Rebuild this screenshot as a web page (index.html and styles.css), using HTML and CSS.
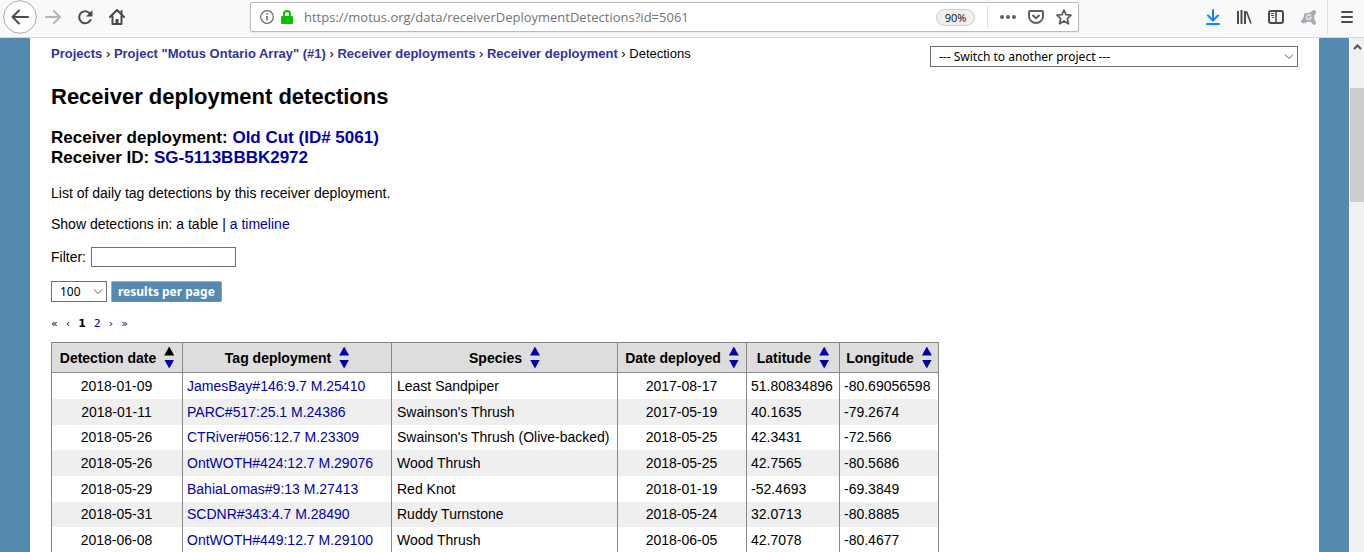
FILE: index.html
```html
<!DOCTYPE html>
<html lang="en">
<head>
<meta charset="utf-8">
<title>Receiver deployment detections</title>
<link rel="stylesheet" href="styles.css">
</head>
<body>
<header class="toolbar">
  <nav class="nav-buttons">
    <button class="icon-button back" aria-label="Back"><svg width="34" height="34" viewBox="0 0 34 34" fill="none"><circle cx="17" cy="17" r="16.3" fill="#fff" stroke="#aaa"/><path d="M25 17H10M16 10.500L9.500 17L16 23.500" stroke="#4a4a4c" stroke-width="2" stroke-linecap="round" stroke-linejoin="round"/></svg></button>
    <button class="icon-button" aria-label="Forward"><svg width="16" height="16" viewBox="0 0 16 16" fill="none" stroke="#b5b5b6" stroke-width="2" stroke-linecap="round" stroke-linejoin="round"><path d="M1 8H14M9 2L15 8L9 14"/></svg></button>
    <button class="icon-button" aria-label="Reload"><svg width="16" height="16" viewBox="0 0 16 16" fill="none" stroke="#4a4a4c" stroke-width="2"><path d="M13.500 5.500A6 6 0 1 0 13.500 11" stroke-linecap="round"/><path d="M15.500 1V7.500H9Z" fill="#4a4a4c" stroke="none"/></svg></button>
    <button class="icon-button" aria-label="Home"><svg width="16" height="16" viewBox="0 0 16 16" fill="none" stroke="#4a4a4c" stroke-width="2" stroke-linecap="round" stroke-linejoin="round"><path d="M1 8L8 1L15 8M3.500 7V15H12.500V7"/><path d="M8 15V10" stroke-width="3" stroke-linecap="butt"/><path d="M12.500 2V5"/></svg></button>
  </nav>
  <div class="address">
    <svg class="info" width="14" height="14" viewBox="0 0 14 14" fill="none" stroke="#69696b"><circle cx="7" cy="7" r="6.300" stroke-width="1.200"/><path d="M7 6V10.500M7 3.200V4.800" stroke-width="1.600"/></svg>
    <svg width="12" height="15" viewBox="0 0 12 15"><path d="M3 7V4A3 3 0 0 1 9 4V7" fill="none" stroke="#12bc00" stroke-width="2"/><rect y="6" width="12" height="8" rx="1" fill="#12bc00"/></svg>
    <input class="url" aria-label="Address" value="https://motus.org/data/receiverDeploymentDetections?id=5061">
    <button class="zoom-level">90%</button>
    <span class="address-divider"></span>
    <button class="icon-button" aria-label="Page actions"><svg width="16" height="16" viewBox="0 0 16 16" fill="#606062"><circle cx="2" cy="8" r="2"/><circle cx="8" cy="8" r="2"/><circle cx="14" cy="8" r="2"/></svg></button>
    <button class="icon-button" aria-label="Save to Pocket"><svg width="16" height="16" viewBox="0 0 16 16" fill="none" stroke="#606062" stroke-width="2" stroke-linecap="round" stroke-linejoin="round"><path d="M2 2H14Q15 2 15 3V7.500A7 6.500 0 0 1 1 7.500V3Q1 2 2 2Z"/><path d="M5 6.500L8 9.300L11 6.500"/></svg></button>
    <button class="icon-button" aria-label="Bookmark"><svg width="16" height="16" viewBox="0 0 16 16" fill="none" stroke="#606062" stroke-width="1.800" stroke-linejoin="round"><path d="M8 1L10 5.700L15 6.200L11.300 9.600L12.400 14.800L8 12L3.600 14.800L4.700 9.600L1 6.200L6 5.700Z"/></svg></button>
  </div>
  <nav class="tool-buttons">
    <button class="icon-button" aria-label="Downloads"><svg width="14" height="16" viewBox="0 0 14 16" fill="none" stroke="#0a84ff" stroke-width="2" stroke-linecap="round" stroke-linejoin="round"><path d="M7 1V11M2 6.500L7 11.500L12 6.500M1 15H13"/></svg></button>
    <button class="icon-button" aria-label="Library"><svg width="16" height="16" viewBox="0 0 16 16" fill="none" stroke="#4a4a4c" stroke-width="2"><path d="M2 2V15M5.500 1V15M9 2V15"/><path d="M10.500 2.500L15 14.500" stroke-width="1.700"/></svg></button>
    <button class="icon-button" aria-label="Sidebars"><svg width="16" height="14" viewBox="0 0 16 14" fill="none" stroke="#4a4a4c"><rect x="1" y="1" width="14" height="12" rx="2" stroke-width="2"/><path d="M8 1V13" stroke-width="1.600"/><path d="M3 3.500H6M3 5.500H6M4 7.500H6"/></svg></button>
    <button class="icon-button" aria-label="Avast extension"><svg width="17" height="17" viewBox="0 0 17 17" fill="#aaa9b5"><path d="M4 4.500Q8 4 11 3Q12 1 14.500 1Q16.500 1.500 16 4Q14 6 14 8Q14 11 16 13Q16.500 15.500 14.500 16Q12.500 15.500 11.500 13.500Q9 12 6 13.500Q4 15 2 14Q0 12.500 2 10.500Q4 9 4 4.500Z"/><path d="M11 6.500Q8 4.500 6.500 7.500Q6 10.500 9 10.500Q11.500 10 11 7.500M9 8V9" fill="none" stroke="#eeeef2" stroke-width="1.200"/></svg></button>
    <span class="toolbar-divider"></span>
    <button class="icon-button" aria-label="Menu"><svg width="12" height="12" viewBox="0 0 12 12" stroke="#4a4a4c" stroke-width="2" stroke-linecap="round"><path d="M1 1H11M1 6H11M1 11H11"/></svg></button>
  </nav>
</header>
<div class="viewport">
  <main class="page">
    <div class="page-top">
      <nav class="breadcrumb"><a href="#">Projects</a> › <a href="#">Project "Motus Ontario Array" (#1)</a> › <a href="#">Receiver deployments</a> › <a href="#">Receiver deployment</a> › Detections</nav>
      <select class="project-select" aria-label="Switch project"><option>--- Switch to another project ---</option></select>
    </div>
    <h1>Receiver deployment detections</h1>
    <h2>Receiver deployment: <a href="#">Old Cut (ID# 5061)</a><br>Receiver ID: <a href="#">SG-5113BBBK2972</a></h2>
    <p>List of daily tag detections by this receiver deployment.</p>
    <p>Show detections in: a table | <a href="#">a timeline</a></p>
    <div class="filter-row"><label for="filter">Filter:</label><input id="filter" type="text"></div>
    <div class="results-row"><select class="count-select" aria-label="Number of results"><option>100</option></select><button class="results-button">results per page</button></div>
    <nav class="pager" aria-label="Pages"><span>«</span><span>‹</span><b>1</b><a href="#">2</a><a href="#">›</a><a href="#">»</a></nav>
    <table class="detections">
      <colgroup><col class="c-date"><col class="c-tag"><col class="c-species"><col class="c-deployed"><col class="c-lat"><col class="c-lon"></colgroup>
      <thead><tr>
        <th><span class="head">Detection date <span class="sort"><a class="up active" href="#" aria-label="Ascending"></a><a class="down" href="#" aria-label="Descending"></a></span></span></th>
        <th><span class="head">Tag deployment <span class="sort"><a class="up" href="#" aria-label="Ascending"></a><a class="down" href="#" aria-label="Descending"></a></span></span></th>
        <th><span class="head">Species <span class="sort"><a class="up" href="#" aria-label="Ascending"></a><a class="down" href="#" aria-label="Descending"></a></span></span></th>
        <th><span class="head">Date deployed <span class="sort"><a class="up" href="#" aria-label="Ascending"></a><a class="down" href="#" aria-label="Descending"></a></span></span></th>
        <th><span class="head">Latitude <span class="sort"><a class="up" href="#" aria-label="Ascending"></a><a class="down" href="#" aria-label="Descending"></a></span></span></th>
        <th><span class="head">Longitude <span class="sort"><a class="up" href="#" aria-label="Ascending"></a><a class="down" href="#" aria-label="Descending"></a></span></span></th>
      </tr></thead>
      <tbody>
        <tr><td>2018-01-09</td><td><a href="#">JamesBay#146:9.7 M.25410</a></td><td>Least Sandpiper</td><td>2017-08-17</td><td>51.80834896</td><td>-80.69056598</td></tr>
        <tr><td>2018-01-11</td><td><a href="#">PARC#517:25.1 M.24386</a></td><td>Swainson's Thrush</td><td>2017-05-19</td><td>40.1635</td><td>-79.2674</td></tr>
        <tr><td>2018-05-26</td><td><a href="#">CTRiver#056:12.7 M.23309</a></td><td>Swainson's Thrush (Olive-backed)</td><td>2018-05-25</td><td>42.3431</td><td>-72.566</td></tr>
        <tr><td>2018-05-26</td><td><a href="#">OntWOTH#424:12.7 M.29076</a></td><td>Wood Thrush</td><td>2018-05-25</td><td>42.7565</td><td>-80.5686</td></tr>
        <tr><td>2018-05-29</td><td><a href="#">BahiaLomas#9:13 M.27413</a></td><td>Red Knot</td><td>2018-01-19</td><td>-52.4693</td><td>-69.3849</td></tr>
        <tr><td>2018-05-31</td><td><a href="#">SCDNR#343:4.7 M.28490</a></td><td>Ruddy Turnstone</td><td>2018-05-24</td><td>32.0713</td><td>-80.8885</td></tr>
        <tr><td>2018-06-08</td><td><a href="#">OntWOTH#449:12.7 M.29100</a></td><td>Wood Thrush</td><td>2018-06-05</td><td>42.7078</td><td>-80.4677</td></tr>
      </tbody>
    </table>
  </main>
  <div class="scrollbar" aria-hidden="true">
    <svg width="14" height="17" viewBox="0 0 14 17" fill="none" stroke="#505050" stroke-width="2"><path d="M4 11L7.500 7.500L11 11"/></svg>
    <div class="thumb"></div>
  </div>
</div>
</body>
</html>
```
FILE: styles.css
```css
* { box-sizing: border-box; }

body {
  margin: 0;
  height: 100vh;
  display: flex;
  flex-direction: column;
  overflow: hidden;
  font-family: "Liberation Sans", Arial, sans-serif;
  font-size: 14px;
  line-height: 16px;
  color: #000;
  background: #fff;
}

a { color: #00a; text-decoration: none; }
button, input, select { font: inherit; margin: 0; }

/* Browser toolbar */
.toolbar {
  display: flex;
  align-items: center;
  flex: none;
  height: 38px;
  padding-bottom: 3px;
  background: #f9f9fa;
  border-bottom: 1px solid #d8d8d9;
}
.icon-button {
  display: flex;
  padding: 0;
  border: 0;
  background: none;
}
.nav-buttons {
  display: flex;
  align-items: center;
  gap: 16px;
  width: 250px;
  padding-left: 3px;
}
.nav-buttons .back { margin-right: -8px; }
.address {
  display: flex;
  align-items: center;
  flex: 1;
  height: 30px;
  padding: 0 6px 0 9px;
  background: #fff;
  border: 1px solid #bbb;
  border-radius: 2px;
  box-shadow: 0 1px 3px #0001;
}
.address .info { margin-right: 7px; }
.url {
  flex: 1;
  min-width: 0;
  padding: 0;
  margin-left: 11px;
  border: 0;
  outline: 0;
  background: none;
  font: 13px/20px "Open Sans", sans-serif;
  color: #737373;
}
.zoom-level {
  width: 39px;
  height: 17px;
  padding: 0;
  border: 1px solid #ccc;
  border-radius: 9px;
  background: #f0f0f1;
  font: 11px/15px "Open Sans", sans-serif;
  color: #0c0c0d;
}
.address-divider {
  width: 1px;
  height: 22px;
  margin: 0 12px;
  background: #ddd;
}
.address .icon-button + .icon-button { margin-left: 12px; }
.tool-buttons {
  display: flex;
  align-items: center;
  justify-content: flex-end;
  gap: 16px;
  width: 285px;
  padding-right: 11px;
}
.toolbar-divider {
  width: 1px;
  height: 34px;
  margin-left: -6px;
  margin-right: -3px;
  background: #ddd;
}

/* Page */
.viewport {
  display: flex;
  flex: 1;
  min-height: 0;
}
.page {
  flex: 1;
  min-width: 0;
  overflow: hidden;
  padding: 8px 21px 0;
  border: solid #558ab0;
  border-width: 0 30px;
}
.page-top {
  display: flex;
  align-items: flex-start;
  justify-content: space-between;
  font-size: 13px;
}
.breadcrumb a { color: #339; font-weight: bold; }

select {
  appearance: none;
  padding: 0 8px;
  border: 1px solid #707070;
  border-radius: 0;
  color: #000;
  font-family: "Noto Sans", sans-serif;
  font-size: 12px;
  background: #fff url("data:image/svg+xml,%3Csvg xmlns='http://www.w3.org/2000/svg' width='10' height='6' fill='none' stroke='%23555'%3E%3Cpath d='M1 .5L5 4.500L9 .5'/%3E%3C/svg%3E") no-repeat right 3px center;
}
.project-select { width: 368px; height: 21px; }

h1 { margin: 17px 0 0; font-size: 22px; line-height: 26px; }
h2 { margin: 18px 0 0; font-size: 17px; line-height: 20px; }
p { margin: 15px 0 0; }
h2 + p { margin-top: 17px; }

.filter-row {
  display: flex;
  align-items: center;
  gap: 5px;
  margin-top: 15px;
}
.filter-row input {
  width: 145px;
  height: 20px;
  border: 1px solid #707070;
}
.results-row {
  display: flex;
  align-items: center;
  gap: 4px;
  margin-top: 14px;
}
.count-select { width: 56px; height: 21px; }
.results-button {
  height: 21px;
  padding: 0 6px;
  border: 1px solid #999;
  border-color: #aaa #999 #888 #aaa;
  border-radius: 2px;
  background: #558ab0;
  color: #fff;
  font: bold 12px/18px "Noto Sans", sans-serif;
}
.pager {
  display: flex;
  gap: 8px;
  margin-top: 14px;
  font: 11px/16px "DejaVu Sans", Verdana, sans-serif;
}

/* Detections table */
.detections {
  width: 888px;
  margin-top: 10px;
  table-layout: fixed;
  border-collapse: collapse;
  border: 1px solid #888;
  border-bottom: 0;
}
.c-date { width: 131px; }
.c-tag { width: 209px; }
.c-species { width: 226px; }
.c-deployed { width: 129px; }
.c-lat { width: 93px; }
.c-lon { width: 99px; }
th, td {
  padding: 0 5px;
  border: 0 solid #888;
  border-left-width: 1px;
  white-space: nowrap;
  text-align: left;
}
td { padding-left: 4px; }
td:nth-child(3) { padding-left: 5px; }
td:nth-child(1), td:nth-child(4) { text-align: center; }
th {
  height: 30px;
  padding: 0 4px;
  border-bottom-width: 1px;
  background: #ddd;
}
.head {
  display: flex;
  align-items: center;
  justify-content: center;
  gap: 8px;
}
.sort {
  display: flex;
  flex-direction: column;
  gap: 4px;
}
.up, .down {
  width: 10px;
  height: 9px;
  background: #00a;
}
.up { clip-path: polygon(50% 0, 100% 100%, 0 100%); }
.down { clip-path: polygon(0 0, 100% 0, 50% 100%); }
.up.active { background: #000; }
tbody tr { height: 26px; }
tbody tr:nth-child(3n) { height: 25px; }
tbody tr:nth-child(even) { background: #efefef; }

/* Scrollbar */
.scrollbar {
  flex: none;
  width: 15px;
  border-left: 1px solid #fff;
  background: #f0f0f0;
}
.scrollbar svg { display: block; }
.thumb {
  height: 114px;
  margin-top: 33px;
  background: #cdcdcd;
}
```
